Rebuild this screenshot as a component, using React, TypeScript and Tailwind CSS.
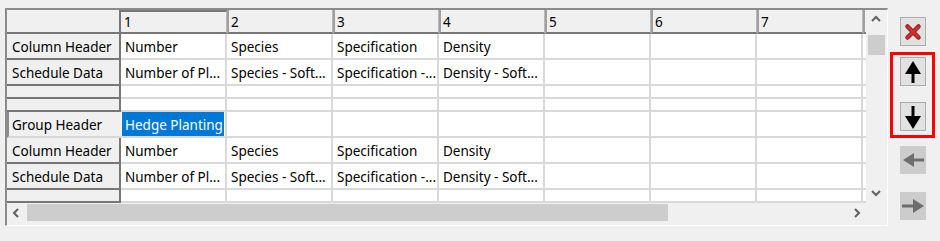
import React from "react";

type Row = { label: string; cells: string[]; h: number; group?: boolean };

const rows: Row[] = [
    { label: "Column Header", cells: ["Number", "Species", "Specification", "Density"], h: 26 },
    { label: "Schedule Data", cells: ["Number of Pl...", "Species - Soft...", "Specification -...", "Density - Soft..."], h: 26 },
    { label: "", cells: [], h: 13 },
    { label: "", cells: [], h: 13 },
    { label: "Group Header", cells: ["Hedge Planting"], h: 26, group: true },
    { label: "Column Header", cells: ["Number", "Species", "Specification", "Density"], h: 26 },
    { label: "Schedule Data", cells: ["Number of Pl...", "Species - Soft...", "Specification -...", "Density - Soft..."], h: 26 },
    { label: "", cells: [], h: 13 },
];

const cols = [1, 2, 3, 4, 5, 6, 7, 8];

const Chevron = ({ dir }: { dir: "up" | "down" | "left" | "right" }) => {
    const d = {
        up: "M2 7 L6 3 L10 7",
        down: "M2 4 L6 8 L10 4",
        left: "M7 2 L3 6 L7 10",
        right: "M4 2 L8 6 L4 10",
    }[dir];
    return (
        <svg width="12" height="12" viewBox="0 0 12 12" className="shrink-0">
            <path d={d} fill="none" stroke="#606060" strokeWidth="2" />
        </svg>
    );
};

const ArrowIcon = ({ dir, color }: { dir: "up" | "down" | "left" | "right"; color: string }) => {
    const shapes = {
        up: { head: "M5 16 L13 3 L21 16 Z", stem: "M13 15 V25" },
        down: { head: "M5 13 L13 26 L21 13 Z", stem: "M13 3 V14" },
        left: { head: "M3 14 L14 7 L14 21 Z", stem: "M13 14 H24" },
        right: { head: "M24 14 L13 7 L13 21 Z", stem: "M2 14 H14" },
    }[dir];
    return (
        <svg width="26" height="28" viewBox="0 0 26 28" className="shrink-0">
            <path d={shapes.stem} stroke={color} strokeWidth="3" />
            <path d={shapes.head} fill={color} />
        </svg>
    );
};

const ToolButton = ({ children, disabled }: { children: React.ReactNode; disabled?: boolean }) => (
    <div
        className={
            disabled
                ? "w-[26px] h-[28px] bg-[#cccccc] flex items-center justify-center overflow-hidden"
                : "w-[26px] h-[29px] bg-[#e1e1e1] border border-[#adadad] flex items-center justify-center overflow-hidden"
        }
    >
        {children}
    </div>
);

const App = () => {
    return (
        <div className="w-[940px] h-[241px] bg-[#f0f0f0] flex text-[#000] font-['Segoe_UI','Noto_Sans',sans-serif] text-[13.5px] leading-none overflow-hidden">
            {/* grid panel */}
            <div className="ml-[5px] mt-[8px] w-[883px] h-[218px] border-t-2 border-l-2 border-t-[#8c8c8c] border-l-[#8c8c8c] border-r border-b border-r-white border-b-white flex flex-col">
                <div className="flex h-[193px]">
                    <div className="w-[859px] overflow-hidden bg-white">
                        {/* column headers */}
                        <div className="flex h-[24px] bg-[#f0f0f0]">
                            <div className="w-[114px] shrink-0 border-r-2 border-b-2 border-[#777777]" />
                            {cols.map((c) => (
                                <div
                                    key={c}
                                    className={
                                        c === 1
                                            ? "w-[106px] shrink-0 border-b-2 border-b-[#777777] border-t-2 border-t-[#777777] border-r border-r-[#b8b8b8] pl-[3px] pt-[2px] flex items-center"
                                            : "w-[106px] shrink-0 border-b-2 border-b-[#777777] border-l-2 border-l-[#a0a0a0] border-r border-r-[#b8b8b8] pl-[2px] pt-[4px] flex items-center"
                                    }
                                >
                                    {c <= 7 ? c : ""}
                                </div>
                            ))}
                        </div>
                        {rows.map((r, i) => (
                            <div key={i} className="flex" style={{ height: r.h }}>
                                <div
                                    className={
                                        r.group
                                            ? "w-[114px] shrink-0 bg-[#f0f0f0] border-l-2 border-l-[#8c8c8c] border-b-2 border-b-[#d8d8d8] pl-[3px] pt-[4px] flex items-center"
                                            : "w-[114px] shrink-0 bg-[#f0f0f0] border-r-2 border-b-2 border-[#777777] pl-[5px] pt-[4px] flex items-center"
                                    }
                                >
                                    {r.label}
                                </div>
                                {cols.map((c) => {
                                    const text = r.cells[c - 1] ?? "";
                                    const selected = r.group && c === 1;
                                    return (
                                        <div
                                            key={c}
                                            className="w-[106px] shrink-0 border-r-2 border-b-2 border-[#d9d9d9] flex items-center whitespace-nowrap overflow-hidden"
                                        >
                                            {selected ? (
                                                <span className="ml-[1px] w-[102px] h-[24px] bg-[#0078d7] text-white pl-[3px] pt-[4px] flex items-center">
                                                    {text}
                                                </span>
                                            ) : (
                                                <span className="pl-[4px] pt-[4px]">{text}</span>
                                            )}
                                        </div>
                                    );
                                })}
                            </div>
                        ))}
                    </div>
                    {/* vertical scrollbar */}
                    <div className="w-[20px] bg-[#f0f0f0] flex flex-col items-center">
                        <div className="h-[20px] flex items-center justify-center">
                            <Chevron dir="up" />
                        </div>
                        <div className="w-[17px] h-[20px] mt-[5px] bg-[#cdcdcd]" />
                        <div className="flex-1" />
                        <div className="h-[20px] flex items-center justify-center">
                            <Chevron dir="down" />
                        </div>
                    </div>
                </div>
                {/* horizontal scrollbar */}
                <div className="flex h-[20px] bg-[#f0f0f0]">
                    <div className="w-[20px] flex items-center justify-center">
                        <Chevron dir="left" />
                    </div>
                    <div className="w-[641px] h-[17px] mt-[1px] bg-[#cdcdcd]" />
                    <div className="flex-1" />
                    <div className="w-[20px] flex items-center justify-center mr-[20px]">
                        <Chevron dir="right" />
                    </div>
                </div>
            </div>

            {/* tool buttons */}
            <div className="ml-[2px] flex flex-col items-start">
                <div className="mt-[17px] ml-[10px]">
                    <ToolButton>
                        <svg width="18" height="18" viewBox="0 0 18 18" className="shrink-0">
                            <path d="M3.5 3.5 L14.5 14.5 M14.5 3.5 L3.5 14.5" stroke="#8b1a1a" strokeWidth="4.5" strokeLinecap="round" />
                            <path d="M3.5 3.5 L14.5 14.5 M14.5 3.5 L3.5 14.5" stroke="#d0302a" strokeWidth="2.5" strokeLinecap="round" />
                        </svg>
                    </ToolButton>
                </div>
                <div className="mt-[6px] w-[45px] h-[86px] border-[3px] border-[#ff0000] pl-[7px] pt-[2px] flex flex-col gap-[16px]">
                    <ToolButton>
                        <ArrowIcon dir="up" color="#000" />
                    </ToolButton>
                    <ToolButton>
                        <ArrowIcon dir="down" color="#000" />
                    </ToolButton>
                </div>
                <div className="mt-[8px] ml-[10px]">
                    <ToolButton disabled>
                        <ArrowIcon dir="left" color="#6d6d6d" />
                    </ToolButton>
                </div>
                <div className="mt-[18px] ml-[10px]">
                    <ToolButton disabled>
                        <ArrowIcon dir="right" color="#6d6d6d" />
                    </ToolButton>
                </div>
            </div>
        </div>
    );
};

export default App;
